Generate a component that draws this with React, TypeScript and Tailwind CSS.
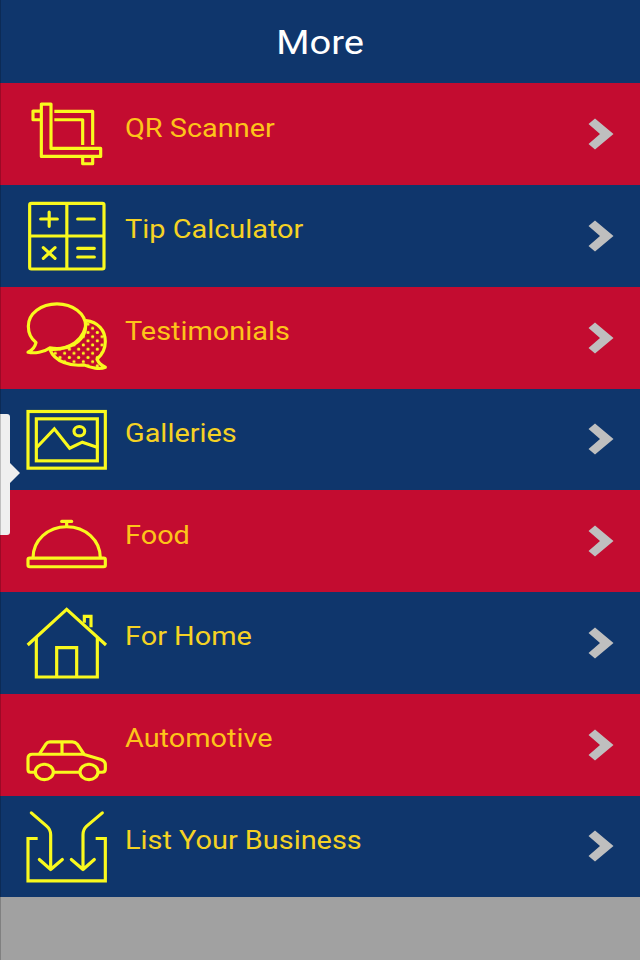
import React from 'react';

interface IconProps {
  top: number;
  children: React.ReactNode;
}

const Icon: React.FC<IconProps> = ({ top, children }) => (
  <svg
    className="w-[84px] h-full shrink-0"
    viewBox={`72 ${top} 252 305.25`}
    fill="none"
    stroke="currentColor"
    strokeWidth="9.5"
  >
    {children}
  </svg>
);

const ScannerIcon = () => (
  <Icon top={9.75}>
    <g strokeLinejoin="round">
      <path d="M124 73H153V206H302V230H124Z" />
      <path d="M124 94H99V120H124M248 230V252H278V230" />
      <path d="M163 95H278V196M163 120H248V196" />
    </g>
  </Icon>
);

const CalculatorIcon = () => (
  <Icon top={3}>
    <rect x="89" y="58" width="223" height="197" rx="5" />
    <path d="M200.500 58V255M89 156H312" />
    <g strokeLinecap="round">
      <path d="M122 105H172M147.500 84V127M233 105H283" />
      <path d="M130 191L165 223M165 191L130 223M233 193H283M233 219H283" />
    </g>
  </Icon>
);

const BubblesIcon = () => (
  <Icon top={2.25}>
    <defs>
      <pattern id="dots" x="187" y="118" width="28" height="25" patternUnits="userSpaceOnUse">
        <g fill="currentColor" stroke="none">
          <circle cx="7" cy="8" r="4.800" />
          <circle cx="21" cy="20.500" r="4.800" />
        </g>
      </pattern>
    </defs>
    <g strokeLinejoin="round">
      <path
        fill="url(#dots)"
        d="M258 103C294 107 316 132 316 166C316 189 306 206 291 219C296 230 305 238 316 243C300 250 272 245 252 236C214 241 164 227 150 190C205 190 258 164 258 103Z"
      />
      <path d="M171 53C218 53 257 82 257 120C257 158 218 187 171 187C163 187 156 186 149 185C132 198 103 202 84 198C97 192 105 182 108 169C94 158 85 140 85 120C85 82 123 53 171 53Z" />
    </g>
  </Icon>
);

const PictureIcon = () => (
  <Icon top={2.5}>
    <rect x="84" y="70" width="232" height="170" />
    <rect x="109" y="92" width="183" height="126" />
    <path d="M110 178L163 122L209 180L247 162L291 177" />
    <ellipse cx="238" cy="129" rx="16" ry="14" />
  </Icon>
);

const ClocheIcon = () => (
  <Icon top={0.75}>
    <rect x="84" y="205" width="232" height="26" rx="5" />
    <path d="M99 205C99 151 144 111 200 111C256 111 301 151 301 205" />
    <path strokeLinecap="round" d="M185 95H215" />
    <path d="M200 95V109" />
  </Icon>
);

const HouseIcon = () => (
  <Icon top={0}>
    <path d="M83 159L200 52L318 159" />
    <path d="M109 138V255H292V138" />
    <path d="M170 255V167H230V255" />
    <path d="M253 92V73H273V106" />
  </Icon>
);

const CarIcon = () => (
  <Icon top={-0.75}>
    <g strokeLinejoin="round">
      <path d="M106 234H91Q84 234 84 226V193Q84 180 97 180H250L303 196Q316 201 316 211V225Q316 234 306 234H293" />
      <path d="M160 234H240M119 178L138 149Q142 143 150 143H217Q226 143 232 150L252 180M186 143V180" />
    </g>
    <ellipse cx="133" cy="233" rx="27" ry="23" />
    <ellipse cx="267" cy="233" rx="27" ry="23" />
  </Icon>
);

const InboxIcon = () => (
  <Icon top={-1.5}>
    <path d="M113 126H84V253H316V126H287" />
    <g strokeLinecap="round" strokeLinejoin="round">
      <path d="M94 49L140 89Q152 99 152 115V219M118 189L152 219L187 189" />
      <path d="M307 49L260 89Q249 99 249 115V219M214 189L249 219L283 189" />
    </g>
  </Icon>
);

const items = [
  { label: 'QR Scanner', icon: <ScannerIcon /> },
  { label: 'Tip Calculator', icon: <CalculatorIcon /> },
  { label: 'Testimonials', icon: <BubblesIcon /> },
  { label: 'Galleries', icon: <PictureIcon /> },
  { label: 'Food', icon: <ClocheIcon /> },
  { label: 'For Home', icon: <HouseIcon /> },
  { label: 'Automotive', icon: <CarIcon /> },
  { label: 'List Your Business', icon: <InboxIcon /> },
];

const Chevron = () => (
  <svg className="w-[26px] h-8 shrink-0" viewBox="0 0 26 32" fill="#bfbfbf">
    <path d="M0.500 6L7 0.500L25.500 16L7 31.500L0.500 26L12 16Z" />
  </svg>
);

const App: React.FC = () => (
  <div className="relative flex h-[960px] w-[640px] flex-col overflow-hidden bg-[#a1a1a1] font-[Roboto,sans-serif]">
    <header className="flex h-[83.25px] shrink-0 items-center justify-center bg-[#0f366c]">
      <h1 className="scale-x-[1.12] text-[34px] leading-none text-white">More</h1>
    </header>

    <ul>
      {items.map(item => (
        <li
          key={item.label}
          className="flex h-[101.75px] items-center bg-[#0f366c] pl-6 pr-[26px] text-[#f5d224] odd:bg-[#c30c30] odd:text-[#fdc41a]"
        >
          <div className="h-full text-[#f9f91e]">{item.icon}</div>
          <span className="ml-[16.5px] mb-3 flex-1 origin-left scale-x-[1.155] whitespace-nowrap text-[25px] leading-none">
            {item.label}
          </span>
          <Chevron />
        </li>
      ))}
    </ul>

    {/* Side drawer handle */}
    <div className="absolute left-0 top-[414px] flex h-[121px] w-5">
      <div className="h-full w-2.5 rounded-r-[3px] bg-[#efefef]" />
      <svg className="mt-[49px] h-5 w-2.5" viewBox="0 0 10 20">
        <path fill="#efefef" d="M0 0L10 10L0 20Z" />
      </svg>
    </div>
    <div className="pointer-events-none absolute inset-0 border-l border-black/20" />
  </div>
);

export default App;
